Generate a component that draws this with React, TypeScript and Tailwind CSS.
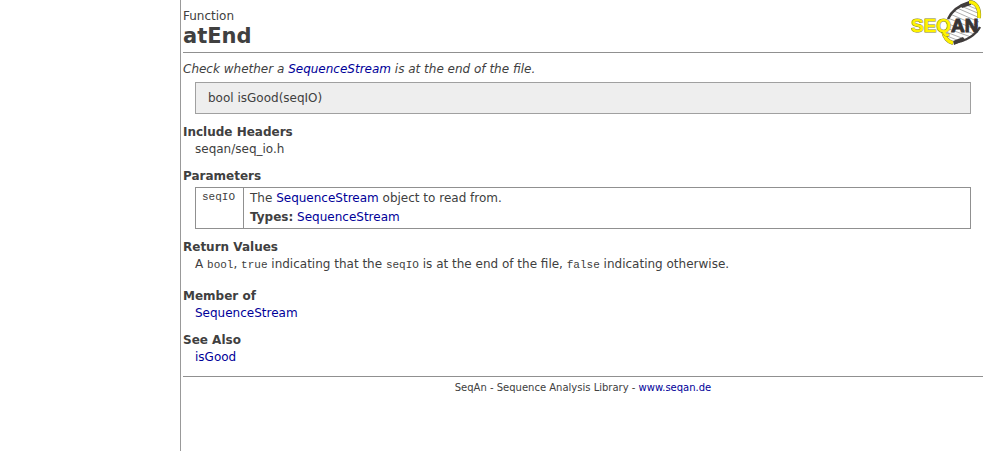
import type { ReactNode } from "react";

function DocLink({ href = "#", children }: { href?: string; children: ReactNode }) {
  return (
    <a href={href} className="text-[#000099]">
      {children}
    </a>
  );
}

function Code({ children }: { children: ReactNode }) {
  return <code className="font-['Liberation_Mono',monospace] text-[11px] leading-none">{children}</code>;
}

function Section({ title, children }: { title: string; children: ReactNode }) {
  return (
    <section className="mt-2.5">
      <h2 className="font-bold">{title}</h2>
      <div className="ml-3">{children}</div>
    </section>
  );
}

function Logo() {
  return (
    <svg viewBox="0 0 72 46" className="h-[46px] w-[72px] shrink-0" role="img" aria-label="SeqAn">
      <path d="M34 27 C34 16 43 5 58 2 L66 5 C72 13 67 29 59 36 C53 41 48 43 40 41 C36 38 34 34 34 27 Z" fill="#fff" />
      <g stroke="#8a8a8a" strokeWidth="0.7">
        <path d="M53 4 L68 10 M50 6 L69 14 M46 8 L69 18 M43 11 L68 22 M39 14 L67 26 M37 18 L66 30 M35 23 L63 34 M35 28 L60 37 M35 32 L56 40 M36 36 L51 42" />
      </g>
      <g fill="none" stroke="#403c3c" strokeWidth="2.4">
        <path d="M37 19 C41 10 49 5 59 2" />
        <path d="M69 27 C64 36 54 41 43 43" />
      </g>
      <path d="M49 5 L60 1 L60 5 L51 8 Z M42 41 L52 37 L54 40 L43 45 Z" fill="#403c3c" />
      <path d="M58 2 C65 2 69 8 68 18" fill="none" stroke="#77772f" strokeWidth="4" />
      <path d="M58 2 C65 2 69 8 68 18" fill="none" stroke="#fff200" strokeWidth="3.2" />
      <path d="M32 31 C33 37 37 42 42 43" fill="none" stroke="#77772f" strokeWidth="4" />
      <path d="M32 31 C33 37 37 42 42 43" fill="none" stroke="#fff200" strokeWidth="3.2" />
      <g fontFamily="Liberation Sans, sans-serif" fontWeight="bold" fontSize="19">
        <text x="0" y="32" fill="#fff200" stroke="#85852d" strokeWidth="1" paintOrder="stroke">
          SEQ
        </text>
        <text x="40" y="32" fill="#383535" stroke="#383535" strokeWidth="1">
          AN
        </text>
      </g>
    </svg>
  );
}

export default function App() {
  return (
    <div className="flex min-h-screen bg-white font-['DejaVu_Sans',sans-serif] text-[12px] leading-[17px] text-[#404040]">
      <aside className="w-[181px] shrink-0 border-r border-[#999999]" />
      <main className="min-w-0 flex-1 pr-[25px] pl-0.5">
        <header className="flex items-start justify-between border-b border-[#909090] pb-1">
          <div className="pt-2">
            <p className="leading-4">Function</p>
            <h1 className="text-[21px] leading-6 font-bold">atEnd</h1>
          </div>
          <Logo />
        </header>
        <p className="mt-2 italic">
          Check whether a <DocLink>SequenceStream</DocLink> is at the end of the file.
        </p>
        <div className="mt-1 mr-3 ml-3 border border-[#a0a0a0] bg-[#eeeeee] px-3 py-[7px] leading-4">
          bool isGood(seqIO)
        </div>
        <Section title="Include Headers">seqan/seq_io.h</Section>
        <Section title="Parameters">
          <div className="mt-0.5 pr-3">
            <table className="w-full border-collapse border border-[#909090]">
              <tbody>
                <tr className="align-top">
                  <th scope="row" className="w-12 border-r border-[#909090] px-1.5 text-left font-normal">
                    <Code>seqIO</Code>
                  </th>
                  <td className="px-1.5 pt-px pb-px leading-[19px]">
                    <p>
                      The <DocLink>SequenceStream</DocLink> object to read from.
                    </p>
                    <p>
                      <b>Types:</b> <DocLink>SequenceStream</DocLink>
                    </p>
                  </td>
                </tr>
              </tbody>
            </table>
          </div>
        </Section>
        <Section title="Return Values">
          <p className="pb-[5px]">
            A <Code>bool</Code>, <Code>true</Code> indicating that the <Code>seqIO</Code> is at the end of the file,{" "}
            <Code>false</Code> indicating otherwise.
          </p>
        </Section>
        <Section title="Member of">
          <DocLink>SequenceStream</DocLink>
        </Section>
        <Section title="See Also">
          <DocLink>isGood</DocLink>
        </Section>
        <footer className="mt-2.5 border-t border-[#909090] pt-0.5 text-center text-[10px]">
          SeqAn - Sequence Analysis Library - <DocLink href="http://www.seqan.de">www.seqan.de</DocLink>
        </footer>
      </main>
    </div>
  );
}
